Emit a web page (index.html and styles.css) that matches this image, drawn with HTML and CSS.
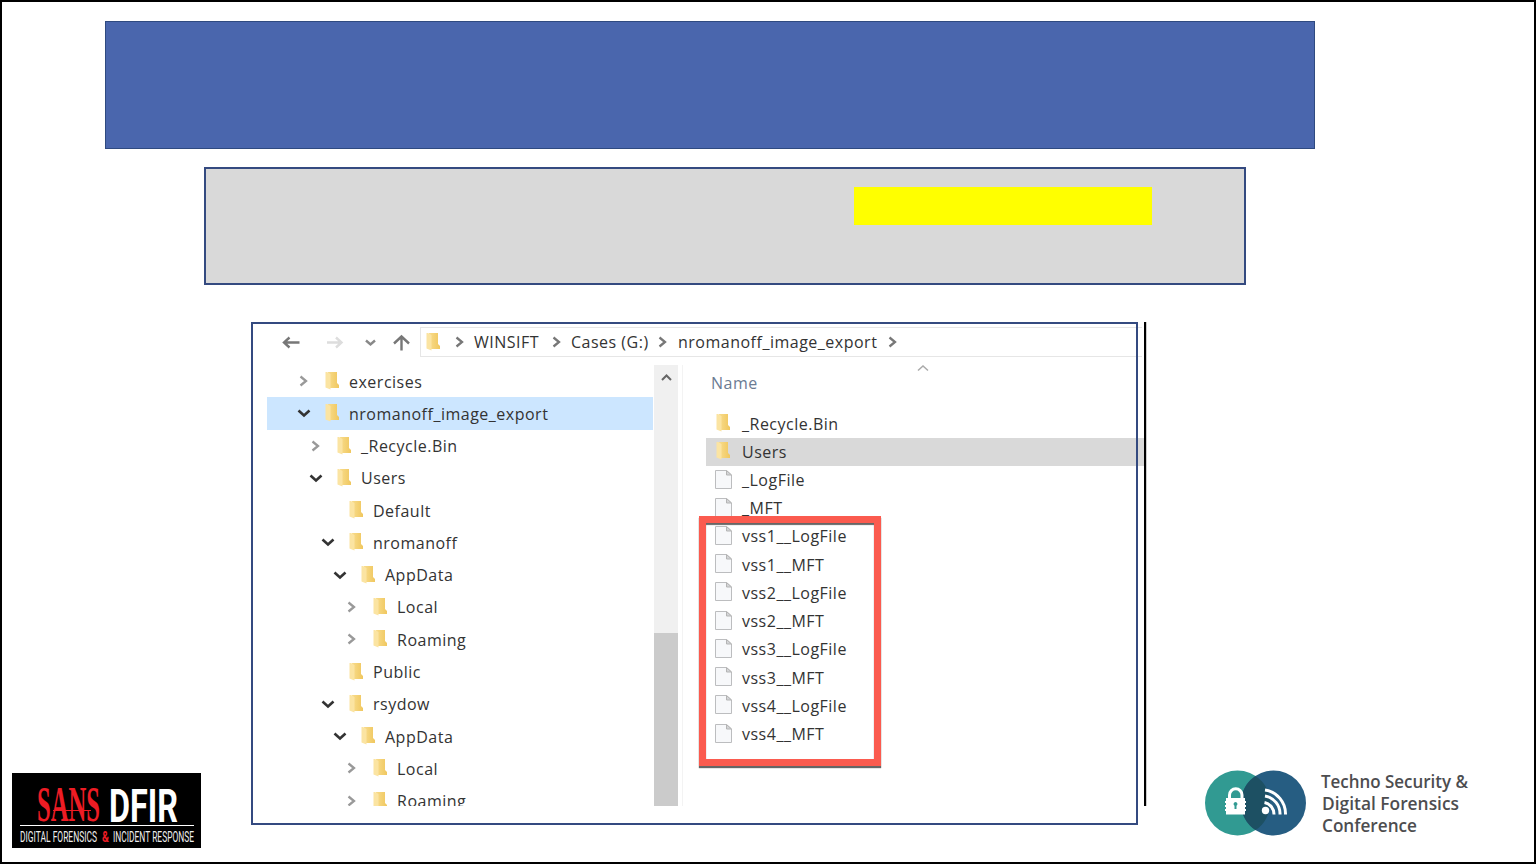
FILE: index.html
```
<!DOCTYPE html>
<html lang="en">
<head>
  <meta charset="UTF-8">
  <meta name="viewport" content="width=device-width, initial-scale=1.0">
  <title>Volume Shadow Export</title>
  <link rel="stylesheet" href="styles.css">
</head>
<body>
  <!-- Shared icons -->
  <svg class="sprite" width="0" height="0">
    <linearGradient id="gold" x1="0" x2="1">
      <stop offset="0" stop-color="#f8dc8c"/>
      <stop offset="1" stop-color="#f0c75e"/>
    </linearGradient>
    <symbol id="folder" viewBox="0 0 16 20">
      <path d="M3 1h9v11l2 2v3H4z" fill="url(#gold)"/>
      <path d="M.500 1h1.500l3.500 2v15.500l-5-2z" fill="#fbe4a2"/>
    </symbol>
    <symbol id="file" viewBox="0 0 18 20">
      <path d="M.500.500h11l5 4.500v13.500h-16z" fill="#f7f8fa" stroke="#bcbdbf"/>
      <path d="M11.500.500v4.500h5z" fill="#d4d5d7" stroke="#b4b4b4"/>
    </symbol>
    <symbol id="right" viewBox="0 0 12 12">
      <path d="M2.500 1.500l5.500 4.500-5.500 4.500" fill="none" stroke="currentColor" stroke-width="2.300"/>
    </symbol>
    <symbol id="down" viewBox="0 0 14 12">
      <path d="M1.500 3.500L7 8.500l5.500-5" fill="none" stroke="currentColor" stroke-width="2.600"/>
    </symbol>
  </svg>

  <div class="slide">
    <div class="title"></div>
    <div class="note"><div class="highlight"></div></div>

    <div class="bottom">
      <svg class="sans" width="189" height="75" viewBox="0 0 189 75">
        <rect width="189" height="75" fill="#000"/>
        <text class="sans-name" x="25" y="48" textLength="63" lengthAdjust="spacingAndGlyphs">SANS</text>
        <path d="M41 37.500h38" stroke="#ed1c24" stroke-width="1"/>
        <text class="sans-dfir" x="97" y="48.500" textLength="69" lengthAdjust="spacingAndGlyphs">DFIR</text>
        <path d="M8 52.500h174" stroke="#fff" stroke-width="1"/>
        <text class="sans-sub" x="8" y="68.500" textLength="77" lengthAdjust="spacingAndGlyphs">DIGITAL FORENSICS</text>
        <text class="sans-sub red" x="90" y="68.500" textLength="7" lengthAdjust="spacingAndGlyphs">&amp;</text>
        <text class="sans-sub" x="101" y="68.500" textLength="81" lengthAdjust="spacingAndGlyphs">INCIDENT RESPONSE</text>
      </svg>

      <div class="frame">
        <div class="explorer">
          <div class="toolbar">
            <svg class="nav" width="153" height="30" viewBox="0 0 153 30" fill="none" stroke-width="2.400">
              <path d="M17 15.500h15.500M22.500 10.500l-5.500 5 5.500 5" stroke="#777"/>
              <path d="M60 15.500h14.500M69 10.500l5.500 5-5.500 5" stroke="#ddd"/>
              <path d="M99 13.500l4.500 4 4.500-4" stroke="#888"/>
              <path d="M134.500 23.500V9.500M127 16.500l7.500-7 7.500 7" stroke="#777"/>
            </svg>
            <div class="address">
              <svg class="folder" width="16" height="20"><use href="#folder"/></svg>
              <svg class="sep" width="12" height="12"><use href="#right"/></svg>
              <span class="crumb winsift">WINSIFT</span>
              <svg class="sep" width="12" height="12"><use href="#right"/></svg>
              <span class="crumb cases">Cases (G:)</span>
              <svg class="sep" width="12" height="12"><use href="#right"/></svg>
              <span class="crumb export">nromanoff_image_export</span>
              <svg class="sep" width="12" height="12"><use href="#right"/></svg>
            </div>
          </div>

          <div class="panes">
            <div class="tree">
              <div class="node"><svg class="arrow"><use href="#right"/></svg><svg class="folder"><use href="#folder"/></svg><span>exercises</span></div>
              <div class="node selected"><svg class="arrow open"><use href="#down"/></svg><svg class="folder"><use href="#folder"/></svg><span>nromanoff_image_export</span></div>
              <div class="node level1"><svg class="arrow"><use href="#right"/></svg><svg class="folder"><use href="#folder"/></svg><span>_Recycle.Bin</span></div>
              <div class="node level1"><svg class="arrow open"><use href="#down"/></svg><svg class="folder"><use href="#folder"/></svg><span>Users</span></div>
              <div class="node level2"><svg class="arrow"></svg><svg class="folder"><use href="#folder"/></svg><span>Default</span></div>
              <div class="node level2"><svg class="arrow open"><use href="#down"/></svg><svg class="folder"><use href="#folder"/></svg><span>nromanoff</span></div>
              <div class="node level3"><svg class="arrow open"><use href="#down"/></svg><svg class="folder"><use href="#folder"/></svg><span>AppData</span></div>
              <div class="node level4"><svg class="arrow"><use href="#right"/></svg><svg class="folder"><use href="#folder"/></svg><span>Local</span></div>
              <div class="node level4"><svg class="arrow"><use href="#right"/></svg><svg class="folder"><use href="#folder"/></svg><span>Roaming</span></div>
              <div class="node level2"><svg class="arrow"></svg><svg class="folder"><use href="#folder"/></svg><span>Public</span></div>
              <div class="node level2"><svg class="arrow open"><use href="#down"/></svg><svg class="folder"><use href="#folder"/></svg><span>rsydow</span></div>
              <div class="node level3"><svg class="arrow open"><use href="#down"/></svg><svg class="folder"><use href="#folder"/></svg><span>AppData</span></div>
              <div class="node level4"><svg class="arrow"><use href="#right"/></svg><svg class="folder"><use href="#folder"/></svg><span>Local</span></div>
              <div class="node level4"><svg class="arrow"><use href="#right"/></svg><svg class="folder"><use href="#folder"/></svg><span>Roaming</span></div>
            </div>

            <div class="scrollbar">
              <svg width="24" height="24" viewBox="0 0 24 24"><path d="M8 15l4.500-4.500L17 15" fill="none" stroke="#666" stroke-width="2"/></svg>
              <div class="thumb"></div>
            </div>

            <div class="files">
              <div class="head">
                <span>Name</span>
                <svg width="12" height="8" viewBox="0 0 12 8"><path d="M1 5.500l5-4.500 5 4.500" fill="none" stroke="#aaa" stroke-width="1.500"/></svg>
              </div>
              <div class="file"><svg><use href="#folder"/></svg><span>_Recycle.Bin</span></div>
              <div class="file active"><svg><use href="#folder"/></svg><span>Users</span></div>
              <div class="file"><svg><use href="#file"/></svg><span>_LogFile</span></div>
              <div class="file"><svg><use href="#file"/></svg><span>_MFT</span></div>
              <div class="file"><svg><use href="#file"/></svg><span>vss1__LogFile</span></div>
              <div class="file"><svg><use href="#file"/></svg><span>vss1__MFT</span></div>
              <div class="file"><svg><use href="#file"/></svg><span>vss2__LogFile</span></div>
              <div class="file"><svg><use href="#file"/></svg><span>vss2__MFT</span></div>
              <div class="file"><svg><use href="#file"/></svg><span>vss3__LogFile</span></div>
              <div class="file"><svg><use href="#file"/></svg><span>vss3__MFT</span></div>
              <div class="file"><svg><use href="#file"/></svg><span>vss4__LogFile</span></div>
              <div class="file"><svg><use href="#file"/></svg><span>vss4__MFT</span></div>
              <div class="callout"></div>
            </div>
          </div>
        </div>
      </div>

      <svg class="techno" width="270" height="68" viewBox="0 0 270 68">
        <circle cx="32.500" cy="33" r="32.500" fill="#319a92"/>
        <circle cx="68.500" cy="33" r="32.500" fill="#265d82"/>
        <path d="M50.500 5.900a32.500 32.500 0 0 1 0 54.200a32.500 32.500 0 0 1 0-54.200z" fill="#1d5063"/>
        <path d="M24.500 29v-4a6.200 6.200 0 0 1 12.500 0v4" fill="none" stroke="#fff" stroke-width="3"/>
        <path d="M21 28h19v3h1v2h-1v2h1v2h-1v2h1v2h-1v3.500H21v-3.500h-1v-2h1v-2h-1v-2h1v-2h-1v-2h1z" fill="#fff"/>
        <path d="M30.500 32a2 2 0 0 1 1 3.700V39h-2v-3.300a2 2 0 0 1 1-3.700z" fill="#319a92"/>
        <circle cx="60.500" cy="40.500" r="3.700" fill="#fff"/>
        <path d="M59.500 32.500a12 12 0 0 1 9.500 12M60 26a18 18 0 0 1 15 18.500M60 20a24 24 0 0 1 20.500 24.500" fill="none" stroke="#fff" stroke-width="3"/>
        <text x="116" y="17.500" textLength="147" lengthAdjust="spacingAndGlyphs">Techno Security &amp;</text>
        <text x="117" y="39.500" textLength="137" lengthAdjust="spacingAndGlyphs">Digital Forensics</text>
        <text x="117" y="62" textLength="95" lengthAdjust="spacingAndGlyphs">Conference</text>
      </svg>
    </div>
  </div>
</body>
</html>
```
FILE: styles.css
```
* {
  box-sizing: border-box;
}

body {
  margin: 0;
  font-family: "Open Sans", "Noto Sans", sans-serif;
  background-color: white;
  overflow: hidden;
}

svg {
  display: block;
  flex: none;
}

.sprite {
  position: absolute;
}

.slide {
  width: 1536px;
  height: 864px;
  border: 2px solid black;
  padding: 19px 0 0 10px;
}

.title {
  width: 1210px;
  height: 128px;
  margin-left: 93px;
  background-color: #4a66ad;
  border: 1px solid #2f4a80;
}

.note {
  width: 1042px;
  height: 118px;
  margin: 18px 0 0 192px;
  padding: 18px 0 0 648px;
  background-color: #d9d9d9;
  border: 2px solid #344a80;
}

.highlight {
  width: 298px;
  height: 38px;
  background-color: yellow;
}

.bottom {
  display: flex;
  margin-top: 37px;
}

/* SANS logo */
.sans {
  margin: 451px 50px 0 0;
}

.sans-name {
  font: bold 50px "Liberation Serif", serif;
  fill: #ed1c24;
}

.sans-dfir {
  font: bold 46px "Roboto", sans-serif;
  fill: white;
}

.sans-sub {
  font: 15px "Roboto", sans-serif;
  fill: #eee;
}

.sans-sub.red {
  font-weight: bold;
  fill: #ed1c24;
}

/* Explorer window */
.frame {
  position: relative;
  width: 887px;
  height: 503px;
}

.frame::after {
  content: "";
  position: absolute;
  inset: 0;
  border: 2px solid #344a80;
}

.explorer {
  width: 879px;
  height: 484px;
  margin-left: 16px;
  border-right: 2px solid black;
  box-shadow: 1px 0 0 #ccc;
  color: #333;
  font-size: 16px;
  letter-spacing: 0.5px;
  overflow: hidden;
}

.toolbar {
  display: flex;
  height: 43px;
  padding-top: 5px;
}

.address {
  display: flex;
  align-items: center;
  width: 722px;
  height: 30px;
  padding-left: 5px;
  border: 1px solid #e6e6e6;
  border-right: none;
}

.sep {
  color: #777;
}

.address .folder {
  margin-right: 12px;
}

.crumb {
  flex: none;
  white-space: nowrap;
}

.winsift {
  width: 85px;
  padding-left: 8px;
}

.cases {
  width: 94px;
  padding-left: 8px;
}

.export {
  width: 218px;
  padding-left: 9px;
}

.panes {
  display: flex;
  height: 441px;
}

.tree {
  width: 387px;
  overflow: hidden;
}

.node {
  display: flex;
  align-items: center;
  height: 32.270px;
  margin-right: 1px;
  padding-left: 30px;
  white-space: nowrap;
}

.node span {
  padding-top: 1px;
}

.node.selected {
  background-color: #cce6ff;
}

.level1 { padding-left: 42px; }
.level2 { padding-left: 54px; }
.level3 { padding-left: 66px; }
.level4 { padding-left: 78px; }

.arrow {
  width: 14px;
  height: 12px;
  color: #999;
}

.arrow.open {
  color: #333;
}

.node .folder {
  width: 16px;
  height: 20px;
  margin: 0 8px 0 14px;
}

.scrollbar {
  display: flex;
  flex-direction: column;
  justify-content: space-between;
  width: 24px;
  background-color: #f0f0f0;
}

.thumb {
  height: 173px;
  background-color: #cbcbcb;
}

.files {
  position: relative;
  flex: 1;
  margin-left: 4px;
  padding-left: 23px;
  border-left: 1px solid #f3f3f3;
}

.head {
  display: flex;
  height: 44.500px;
  padding-left: 5px;
  color: #6b7b93;
}

.head span {
  width: 206px;
  padding-top: 7px;
}

.file {
  display: flex;
  align-items: center;
  height: 28.230px;
  padding-left: 9px;
  white-space: nowrap;
}

.file.active {
  background-color: #d9d9d9;
}

.file svg {
  width: 18px;
  height: 20px;
  margin: 0 9px 1px 0;
}

.callout {
  position: absolute;
  top: 151px;
  left: 16px;
  width: 182px;
  height: 250px;
  border: 7px solid #fb5b4f;
  box-shadow: 0 2px 1px #666, inset 0 2px 1px #666;
}

/* Techno Security logo */
.techno {
  margin: 448px 0 0 67px;
}

.techno text {
  font: 600 18px "Open Sans", sans-serif;
  fill: #4d4d4f;
}
```
